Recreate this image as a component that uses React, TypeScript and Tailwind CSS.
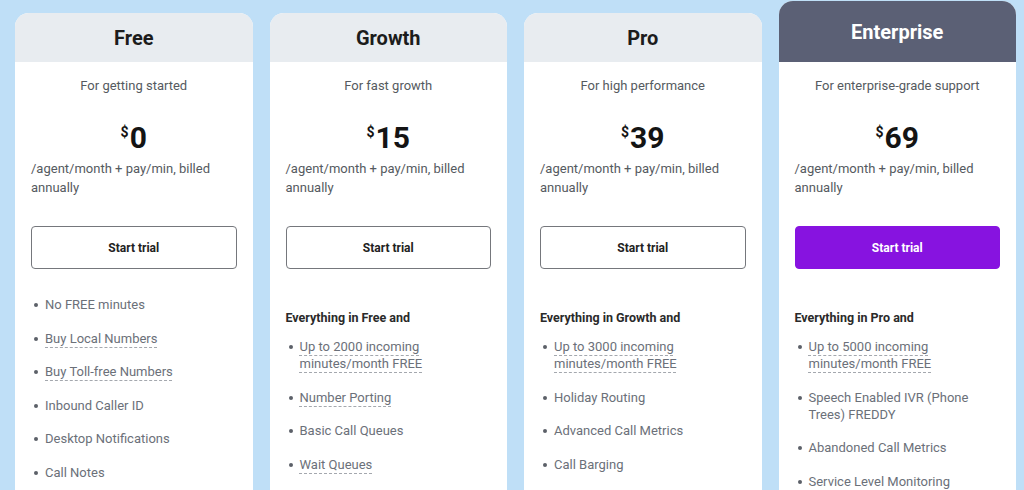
import React, { FC } from 'react';

type Feature = { text: string; dashed?: boolean };

type Plan = {
  name: string;
  tagline: string;
  price: string;
  intro?: string;
  features: Feature[];
  featured?: boolean;
};

const plans: Plan[] = [
  {
    name: 'Free',
    tagline: 'For getting started',
    price: '0',
    features: [
      { text: 'No FREE minutes' },
      { text: 'Buy Local Numbers', dashed: true },
      { text: 'Buy Toll-free Numbers', dashed: true },
      { text: 'Inbound Caller ID' },
      { text: 'Desktop Notifications' },
      { text: 'Call Notes' },
    ],
  },
  {
    name: 'Growth',
    tagline: 'For fast growth',
    price: '15',
    intro: 'Everything in Free and',
    features: [
      { text: 'Up to 2000 incoming minutes/month FREE', dashed: true },
      { text: 'Number Porting', dashed: true },
      { text: 'Basic Call Queues' },
      { text: 'Wait Queues', dashed: true },
    ],
  },
  {
    name: 'Pro',
    tagline: 'For high performance',
    price: '39',
    intro: 'Everything in Growth and',
    features: [
      { text: 'Up to 3000 incoming minutes/month FREE', dashed: true },
      { text: 'Holiday Routing' },
      { text: 'Advanced Call Metrics' },
      { text: 'Call Barging' },
    ],
  },
  {
    name: 'Enterprise',
    tagline: 'For enterprise-grade support',
    price: '69',
    intro: 'Everything in Pro and',
    featured: true,
    features: [
      { text: 'Up to 5000 incoming minutes/month FREE', dashed: true },
      { text: 'Speech Enabled IVR (Phone Trees) FREDDY' },
      { text: 'Abandoned Call Metrics' },
      { text: 'Service Level Monitoring' },
    ],
  },
];

const PlanCard: FC<{ plan: Plan }> = ({ plan }) => {
  return (
    <div
      className={`bg-white rounded-t-[14px] overflow-hidden flex flex-col h-[600px] ${
        plan.featured ? 'mt-0' : 'mt-3'
      }`}
    >
      <div
        className={`flex items-center justify-center text-[20px] font-bold shrink-0 ${
          plan.featured ? 'h-[61px] bg-[#5b6075] text-white' : 'h-[49px] bg-[#e8ecf0] text-[#1c1c1c]'
        }`}
      >
        {plan.name}
      </div>
      <div className="px-4 pt-[14px]">
        <p className="text-center text-[13px] leading-5 text-[#555a60]">{plan.tagline}</p>
        <div className="mt-6 flex justify-center text-[#141414]">
          <div className="flex items-start leading-9">
            <span className="text-[14px] font-bold leading-none mt-[5px] mr-[1px]">$</span>
            <span className="text-[30px] font-bold">{plan.price}</span>
          </div>
        </div>
        <p className="mt-[3px] text-[13px] leading-[19px] text-[#555a60]">
          /agent/month + pay/min, billed annually
        </p>
        <button
          className={`mt-[29px] w-full h-[43px] rounded-[4px] text-[12px] font-bold ${
            plan.featured
              ? 'bg-[#8713e0] text-white border border-[#8713e0]'
              : 'bg-white text-[#222] border border-[#75777c]'
          }`}
        >
          Start trial
        </button>
        {plan.intro ? (
          <p className="mt-10 text-[12.5px] leading-[17px] font-bold text-[#2a2a2a]">{plan.intro}</p>
        ) : null}
        <ul className={`flex flex-col gap-[16.5px] ${plan.intro ? 'mt-3' : 'mt-[27px]'}`}>
          {plan.features.map((f) => (
            <li key={f.text} className="flex items-start text-[13px] leading-[17px] text-[#6b7079]">
              <span className="mt-[7px] ml-[3px] mr-[7px] w-[4px] h-[4px] rounded-full bg-[#5c6068] shrink-0" />
              <span className="pr-6">
                {f.dashed ? (
                  <span className="underline decoration-dashed decoration-[#a4a8ae] decoration-1 underline-offset-[4px]">
                    {f.text}
                  </span>
                ) : (
                  f.text
                )}
              </span>
            </li>
          ))}
        </ul>
      </div>
    </div>
  );
};

const App: FC = () => {
  return (
    <div
      className="h-[490px] overflow-hidden bg-[#bfdff7] pt-px pl-[15px] pr-[8px]"
      style={{ fontFamily: 'Roboto, "Liberation Sans", sans-serif' }}
    >
      <div className="grid grid-cols-4 gap-[17px] items-start">
        {plans.map((p) => (
          <PlanCard key={p.name} plan={p} />
        ))}
      </div>
    </div>
  );
};

export default App;
